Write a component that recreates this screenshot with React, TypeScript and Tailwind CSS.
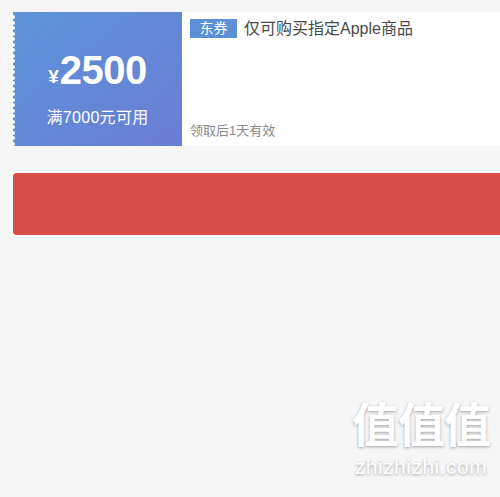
import React from 'react';

const notches = Array.from({ length: 24 });

const App: React.FC = () => {
  return (
    <div
      className="relative w-[500px] h-[497px] overflow-hidden bg-[#f6f6f6]"
      style={{ fontFamily: '"Liberation Sans", "Noto Sans CJK SC", sans-serif' }}
    >
      {/* Coupon */}
      <div className="ml-[13px] pt-[12px]">
        <div className="flex h-[134px]">
          <div className="relative w-[169px] shrink-0 bg-gradient-to-br from-[#5b93d8] to-[#6a7dd5] flex flex-col items-center text-white">
            {/* scalloped edge */}
            <div className="absolute left-[-2px] top-[3px] flex flex-col gap-[1.5px]">
              {notches.map((_, i) => (
                <span key={i} className="block w-[4px] h-[4px] rounded-full bg-white" />
              ))}
            </div>
            <div className="mt-[38px] flex items-end leading-none">
              <span className="text-[19px] font-bold mb-[4px] mr-[1px]">¥</span>
              <span className="text-[40px] font-bold tracking-[-0.5px]">2500</span>
            </div>
            <div className="mt-[20px] text-[16px] leading-none tracking-[0.3px]">满7000元可用</div>
          </div>
          <div className="flex-1 bg-white flex flex-col justify-between pl-[8px] pt-[7px] pb-[9px]">
            <div className="flex items-center">
              <span className="w-[47px] h-[19px] bg-[#5b8fd6] text-white text-[14px] leading-[19px] text-center">东券</span>
              <span className="ml-[7px] text-[16px] text-[#4a4a4a] leading-none">仅可购买指定Apple商品</span>
            </div>
            <div className="text-[13px] text-[#888] leading-none">领取后1天有效</div>
          </div>
        </div>

        {/* Red bar */}
        <div className="mt-[27px] h-[62px] bg-[#d84c47] rounded-l-[4px]" />
      </div>

      {/* Watermark */}
      <div className="absolute left-[348px] top-[402px] w-[146px] flex flex-col items-center text-white [text-shadow:0_1px_3px_rgba(0,0,0,0.35)]">
        <div className="text-[47px] leading-none font-bold tracking-[-1px]">值值值</div>
        <div className="mt-[7px] text-[21px] leading-none tracking-[0.5px]">zhizhizhi.com</div>
      </div>
    </div>
  );
};

export default App;
